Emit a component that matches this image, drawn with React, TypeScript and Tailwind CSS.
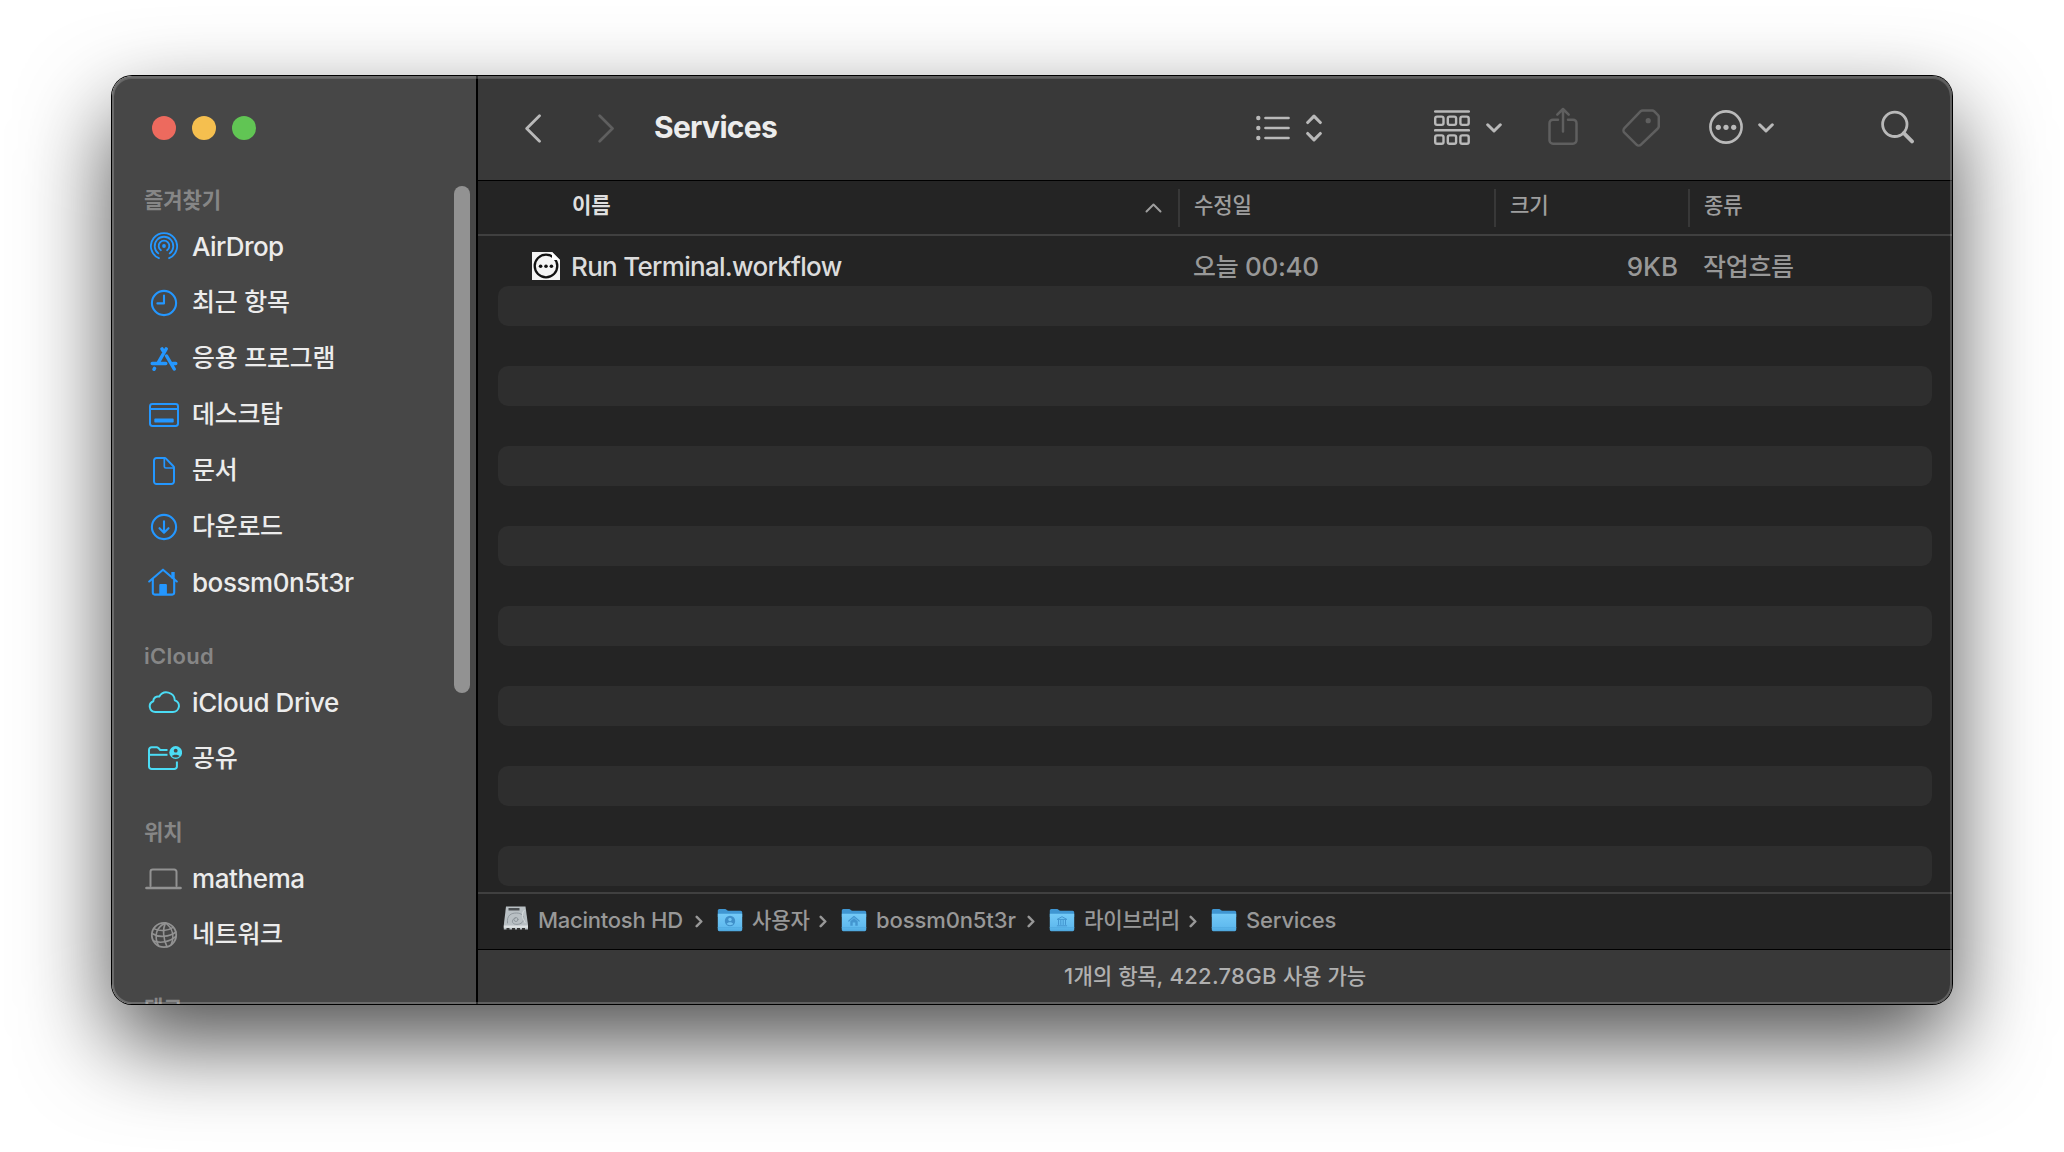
import type { ReactNode } from "react";

/** Splits mixed text so Hangul is set slightly smaller than the Latin around it. */
function T({ children, latin = "", hangul = "" }: { children: string; latin?: string; hangul?: string }) {
  const runs = children.split(/([\uac00-\ud7a3]+)/).filter(Boolean);
  return (
    <>
      {runs.map((run, i) =>
        /[\uac00-\ud7a3]/.test(run) ? (
          <span key={i} className={`text-[0.96em] leading-[0] tracking-[-0.01em] ${hangul}`}>
            {run}
          </span>
        ) : (
          <span key={i} className={latin}>
            {run}
          </span>
        ),
      )}
    </>
  );
}

function Svg({
  w,
  h,
  sw = 2,
  className = "",
  children,
}: {
  w: number;
  h: number;
  sw?: number;
  className?: string;
  children: ReactNode;
}) {
  return (
    <svg
      width={w}
      height={h}
      viewBox={`0 0 ${w} ${h}`}
      fill="none"
      stroke="currentColor"
      strokeWidth={sw}
      strokeLinecap="round"
      strokeLinejoin="round"
      className={`shrink-0 ${className}`}
    >
      {children}
    </svg>
  );
}

const AirDropIcon = () => (
  <Svg w={28} h={28} sw={1.8} className="relative -top-px">
    <path d="M8.9 26.2a13.1 13.1 0 1 1 10.2 0" />
    <path d="M8.3 21.4a9.3 9.3 0 1 1 11.4 0" />
    <path d="M10.9 18.3a5.3 5.3 0 1 1 6.2 0" />
    <circle cx="14" cy="14" r="1.9" fill="currentColor" stroke="none" />
  </Svg>
);
const ClockIcon = () => (
  <Svg w={28} h={28} sw={2.1}>
    <circle cx="14" cy="14" r="12.1" />
    <path d="M14 6.6v7.8H7.4" />
  </Svg>
);
const AppsIcon = () => (
  <Svg w={28} h={24} sw={3.4}>
    <path d="M16.2 1.9 8 16.2M12 1.9l1 1.8M2.2 16.5h13.6M22.8 16.5h3M16.6 9l7.6 13M4.5 21.4l-.5.9" />
  </Svg>
);
const DesktopIcon = () => (
  <Svg w={30} h={24} sw={2}>
    <rect x="1" y="1" width="28" height="22" rx="2.4" />
    <path d="M1 6h28" strokeWidth="1.8" />
    <rect x="5.3" y="15.6" width="19.4" height="4" rx="0.8" fill="currentColor" stroke="none" />
  </Svg>
);
const DocumentIcon = () => (
  <Svg w={22} h={28} sw={2}>
    <path d="M11.6 1H3.5A2.5 2.5 0 0 0 1 3.5V24.5A2.5 2.5 0 0 0 3.5 27h15a2.5 2.5 0 0 0 2.5-2.5V10.6a2 2 0 0 0-.6-1.4L13 1.6A2 2 0 0 0 11.6 1Z" />
    <path d="M11.3 1.4v8a1.6 1.6 0 0 0 1.6 1.6h7.6" strokeWidth="1.7" />
  </Svg>
);
const DownloadIcon = () => (
  <Svg w={28} h={28} sw={2.1}>
    <circle cx="14" cy="14" r="12.1" />
    <path d="M14 8.3v11.2M9.5 15.2l4.5 4.5 4.5-4.5" />
  </Svg>
);
const HomeIcon = () => (
  <Svg w={30} h={28} sw={2.1} className="relative -left-px -top-px">
    <path d="M1.2 13.5 15 1.7l13.8 11.8" />
    <path d="M4.8 11v13.6A2 2 0 0 0 6.8 26.6h17.4a2 2 0 0 0 2-2V11" />
    <path d="M25 4v6.5" strokeWidth="3.4" strokeLinecap="butt" />
    <path d="M11.3 26.5v-9.5a1 1 0 0 1 1-1h5.6a1 1 0 0 1 1 1v9.5z" fill="currentColor" stroke="none" />
  </Svg>
);
const CloudIcon = () => (
  <Svg w={32} h={22} sw={2} className="relative -top-px">
    <path d="M7.3 21h17.6a6 6 0 0 0 1.9-11.7A8.3 8.3 0 0 0 11.3 5.6a4.7 4.7 0 0 0-6 4.6A5.6 5.6 0 0 0 7.3 21Z" />
  </Svg>
);
const SharedFolderIcon = () => (
  <Svg w={34} h={24} sw={2} className="relative left-px -top-px">
    <path
      d="M19.5 4h-7.3L10.3 1.9A2.5 2.5 0 0 0 8.6 1.3H3.6A2.6 2.6 0 0 0 1 3.9v16.5A2.6 2.6 0 0 0 3.6 23H26.3a2.6 2.6 0 0 0 2.6-2.6V15.5"
      strokeLinecap="butt"
    />
    <path d="M1.5 8.8h18" strokeLinecap="butt" />
    <circle cx="27.7" cy="6.5" r="6.4" fill="currentColor" stroke="none" />
    <circle cx="27.7" cy="4.7" r="1.9" fill="#474747" stroke="none" />
    <path d="M24 10.2c.6-2 6.800-2 7.400 0-1.800 1.800-5.600 1.800-7.400 0Z" fill="#474747" stroke="none" />
  </Svg>
);
const LaptopIcon = () => (
  <Svg w={37} h={22} sw={2} className="relative -left-px">
    <path d="M5.500 18V3.800A2.300 2.300 0 0 1 7.800 1.500h21.400a2.300 2.300 0 0 1 2.300 2.300V18" />
    <path d="M1.500 20h34" strokeWidth="2.700" />
  </Svg>
);
const GlobeIcon = () => (
  <Svg w={28} h={28} sw={1.6}>
    <circle cx="14" cy="14" r="12.2" strokeWidth="1.800" />
    <path d="M15.500 1.900C6 6 3.800 15 8.500 24.800M15.500 1.900c-3 6-2.500 15.500 1.500 24M15.500 1.900c7 5 9 13 5.800 21.500" />
    <path d="M3.800 7.600c6 3 14 2.500 19.300-1.200M2 12.500c7 4.500 17 3.500 24-1.500M3.700 20c7 2.500 16 1 22-4.500" />
  </Svg>
);

const BLUE = "text-[#2497ff]";
const CYAN = "text-[#4bdcf5]";
const GRAY = "text-[#929292]";

const SECTIONS = [
  {
    title: "즐겨찾기",
    color: BLUE,
    items: [
      { label: "AirDrop", icon: <AirDropIcon />, latin: "tracking-[-0.6px]" },
      { label: "최근 항목", icon: <ClockIcon /> },
      { label: "응용 프로그램", icon: <AppsIcon /> },
      { label: "데스크탑", icon: <DesktopIcon /> },
      { label: "문서", icon: <DocumentIcon /> },
      { label: "다운로드", icon: <DownloadIcon /> },
      { label: "bossm0n5t3r", icon: <HomeIcon />, latin: "tracking-[-0.45px]" },
    ],
  },
  {
    title: "iCloud",
    color: CYAN,
    items: [
      { label: "iCloud Drive", icon: <CloudIcon />, latin: "tracking-[-0.42px]" },
      { label: "공유", icon: <SharedFolderIcon /> },
    ],
  },
  {
    title: "위치",
    color: GRAY,
    items: [
      { label: "mathema", icon: <LaptopIcon />, latin: "tracking-[-0.4px]" },
      { label: "네트워크", icon: <GlobeIcon /> },
    ],
  },
  { title: "태그", color: GRAY, items: [] },
];

function Sidebar() {
  return (
    <aside className="flex w-[366px] shrink-0 flex-col border-r-2 border-black bg-[#474747]">
      <div className="flex h-[103px] shrink-0 gap-4 pl-10 pt-10">
        <span className="size-6 rounded-full bg-[#ed6a5e]" />
        <span className="size-6 rounded-full bg-[#f5bf4f]" />
        <span className="size-6 rounded-full bg-[#61c554]" />
      </div>
      <div className="flex min-h-0 flex-1 justify-between pr-1.5">
        <nav className="overflow-hidden pl-8">
          {SECTIONS.map((s, i) => (
            <section key={s.title} className={i === 0 ? "" : "pt-6"}>
              <h2 className="flex h-10 items-center pt-0.5 text-[22px] font-semibold leading-[38px] text-[#868686]">
                <span className="whitespace-pre">
                  <T latin="tracking-[0.28px]">{s.title}</T>
                </span>
              </h2>
              {s.items.map((it) => (
                <div key={it.label} className="flex h-14 items-center">
                  <span className={`flex w-10 justify-center ${s.color}`}>{it.icon}</span>
                  <span className="whitespace-pre pl-2 text-[26px] font-medium leading-10 text-[#ececec]">
                    <T latin={it.latin} hangul="relative -top-px">
                      {it.label}
                    </T>
                  </span>
                </div>
              ))}
            </section>
          ))}
        </nav>
        <div className="mt-[7px] h-[507px] w-4 rounded-full bg-[#929292]" />
      </div>
    </aside>
  );
}

const ChevronDown = () => (
  <Svg w={16} h={10} sw={3}>
    <path d="m1.700 1.800 6.300 6.200 6.300-6.200" />
  </Svg>
);

function Toolbar() {
  return (
    <header className="flex h-[105px] shrink-0 items-center border-b border-black bg-[#393939] pl-[47px] text-[#b9b9b9]">
      <Svg w={16} h={29} sw={2.800}>
        <path d="M14.500 1.700 1.700 14.500l12.800 12.800" />
      </Svg>
      <Svg w={16} h={29} sw={2.700} className="ml-[57px] text-[#5f5f5f]">
        <path d="m1.700 1.700 12.800 12.800L1.700 27.300" />
      </Svg>
      <h1 className="ml-10 w-[602px] pb-0.5 text-[30px] font-bold leading-10 tracking-[-0.7px] text-[#ececec]">
        Services
      </h1>
      <Svg w={34} h={26} sw={2.700}>
        <g fill="currentColor" stroke="none">
          <circle cx="2.300" cy="3" r="2.200" />
          <circle cx="2.300" cy="13" r="2.200" />
          <circle cx="2.300" cy="23" r="2.200" />
        </g>
        <path d="M9.500 3h23M9.500 13h23M9.500 23h23" />
      </Svg>
      <Svg w={16} h={28} sw={3.100} className="ml-4">
        <path d="m1.700 8.500 6.300-6.300 6.300 6.300M1.700 19.500l6.300 6.300 6.300-6.300" />
      </Svg>
      <Svg w={36} h={36} sw={2.400} className="relative -top-px ml-28">
        <path d="M1.200 2.500h33.600M1.200 21.300h33.600" strokeWidth="2.600" />
        {[7.6, 26.4].map((y) =>
          [1.2, 13.8, 26.4].map((x) => (
            <rect key={`${x}-${y}`} x={x} y={y} width="8.300" height="8.300" rx="1.800" />
          )),
        )}
      </Svg>
      <span className="ml-4">
        <ChevronDown />
      </span>
      <Svg w={30} h={38} sw={2.500} className="relative -top-0.5 ml-[46px] text-[#5f5f5f]">
        <path d="M10 12.700H5A3.500 3.500 0 0 0 1.500 16.200v17A3.500 3.500 0 0 0 5 36.700h20a3.500 3.500 0 0 0 3.500-3.500v-17a3.500 3.500 0 0 0-3.500-3.500h-5" />
        <path d="M15 24.500V2M9.300 7.700 15 2l5.700 5.700" />
      </Svg>
      <Svg w={38} h={38} sw={2.500} className="ml-11 text-[#5f5f5f]">
        <path d="M20.800 1.500h9.400a3 3 0 0 1 2.100.9l3.700 3.700a3 3 0 0 1 .8 2.100v8.800a3.500 3.500 0 0 1-1 2.500L19 35.600a3.200 3.200 0 0 1-4.500 0L2.400 23.700a3.200 3.200 0 0 1 0-4.500L18.500 2.400a3.200 3.200 0 0 1 2.300-.9Z" />
        <circle cx="26.200" cy="11.700" r="2.600" fill="currentColor" stroke="none" />
      </Svg>
      <Svg w={34} h={34} sw={2.600} className="relative -top-px ml-[49px]">
        <circle cx="17" cy="17" r="15.600" />
        <g fill="currentColor" stroke="none">
          <circle cx="9.300" cy="17.300" r="2.600" />
          <circle cx="17" cy="17.300" r="2.600" />
          <circle cx="24.700" cy="17.300" r="2.600" />
        </g>
      </Svg>
      <span className="ml-[15px]">
        <ChevronDown />
      </span>
      <Svg w={34} h={34} sw={2.800} className="relative -top-px ml-[107px]">
        <circle cx="13.800" cy="14.300" r="12.200" />
        <path d="m22.800 23.200 8.200 8.200" strokeWidth="3.800" />
      </Svg>
    </header>
  );
}

function ColumnHeader() {
  const col = "h-[38px] flex items-center border-[#383838] pl-3.5 pb-[5px]";
  return (
    <div className="flex h-[55px] shrink-0 items-center border-b-2 border-[#404040] text-[22px] font-medium leading-8 text-[#9e9e9e]">
      <div className="flex h-[38px] w-[700px] items-center justify-between pl-[94px] pr-4">
        <span className="whitespace-pre pb-[5px] font-bold text-[#dfdfdf]">
          <T>이름</T>
        </span>
        <Svg w={17} h={10} sw={2}>
          <path d="m1.500 8.500 7-7 7 7" />
        </Svg>
      </div>
      <div className={`${col} w-[316px] border-l-2`}>
        <span>
          <T>수정일</T>
        </span>
      </div>
      <div className={`${col} w-[194px] border-l-2`}>
        <span>
          <T>크기</T>
        </span>
      </div>
      <div className={`${col} flex-1 border-l-2`}>
        <span>
          <T>종류</T>
        </span>
      </div>
    </div>
  );
}

const WorkflowIcon = () => (
  <Svg w={28} h={28} sw={2.300}>
    <path d="M0 0h20l8 8v20H0z" fill="#f4f4f4" stroke="none" />
    <circle cx="14" cy="14" r="11.300" stroke="#111" />
    <path d="M20 0v8h8z" fill="#fff" stroke="none" />
    <g fill="#111" stroke="none">
      <circle cx="8.600" cy="14.200" r="1.800" />
      <circle cx="14" cy="14.200" r="1.800" />
      <circle cx="19.400" cy="14.200" r="1.800" />
    </g>
  </Svg>
);

function FileList() {
  return (
    <div className="flex min-h-0 flex-1 flex-col px-5 pt-2.5">
      <div className="flex h-10 shrink-0 items-center text-[26px] font-medium leading-[38px] text-[#989898]">
        <div className="flex w-[695px] items-center pl-[34px]">
          <WorkflowIcon />
          <span className="whitespace-pre pl-[11px] pt-0.5 tracking-[-0.7px] text-[#dcdcdc]">
            Run Terminal.workflow
          </span>
        </div>
        <span className="w-[310px] whitespace-pre pt-0.5">
          <T latin="tracking-[-0.3px]">오늘 00:40</T>
        </span>
        <span className="w-[175px] pt-0.5 text-right">9KB</span>
        <span className="whitespace-pre pl-[25px] pt-0.5">
          <T>작업흐름</T>
        </span>
      </div>
      {Array.from({ length: 15 }, (_, i) => (
        <div key={i} className="h-10 shrink-0 rounded-[10px] odd:bg-transparent even:bg-[#2e2e2e]" />
      ))}
    </div>
  );
}

const DiskIcon = () => (
  <Svg w={26} h={27} sw={0.900} className="relative -top-px">
    <path d="M3 1.500h19.500L25 20v4.500H.8V20z" fill="#b9c0c4" stroke="none" />
    <path d="M.8 20.500H25v2.300H.8z" fill="#dde1e3" stroke="none" />
    <path d="M3.500 24h3M9 24h3M14 24h3M19 24h3" stroke="#333" strokeWidth="2.200" strokeLinecap="butt" />
    <path d="M5.500 3h11v2.500h-11z" fill="#4b4f52" stroke="none" />
    <path d="M4.500 18c-1-8 4-10 9-10s8 3 7 7-6 5-9 4-3-5 1-6" stroke="#8a9297" />
    <circle cx="13" cy="14.500" r="2" stroke="#8a9297" />
    <path d="M21 5.500c-3 3-1 9 1 12" stroke="#dfe3e5" />
  </Svg>
);

function Folder({ children }: { children?: ReactNode }) {
  return (
    <Svg w={26} h={24} sw={1} className="text-[#4395cf]">
      <defs>
        <linearGradient id="folder" x1="0" y1="0" x2="0" y2="1">
          <stop offset="0" stopColor="#74caf7" />
          <stop offset="0.8" stopColor="#5fb9ee" />
          <stop offset="1" stopColor="#4ba5dc" />
        </linearGradient>
      </defs>
      <path
        d="M.8 2.500A1.500 1.500 0 0 1 2.300 1H8c1.500 0 2 1.800 3.500 1.800h12.200a1.500 1.500 0 0 1 1.500 1.500V9H.8z"
        fill="#3f96d2"
        stroke="none"
      />
      <path
        d="M.8 5.800h24.400v16a1.400 1.400 0 0 1-1.400 1.400H2.200A1.400 1.400 0 0 1 .8 21.800z"
        fill="url(#folder)"
        stroke="none"
      />
      <path d="M1 19.700h24" stroke="#4ea8de" strokeWidth="0.800" />
      {children}
    </Svg>
  );
}

const UserGlyph = () => (
  <>
    <circle cx="13" cy="13" r="5.200" fill="#3f8fc9" stroke="none" />
    <circle cx="13" cy="11.500" r="1.700" fill="#6fc3f2" stroke="none" />
    <path d="M9.800 16c.7-2.300 5.700-2.300 6.400 0-1.500 1.500-4.900 1.500-6.400 0Z" fill="#6fc3f2" stroke="none" />
  </>
);
const HouseGlyph = () => (
  <>
    <path d="M7.800 13 13 8.500l5.200 4.500" strokeWidth="1.200" />
    <path d="M9.300 13.200 13 10l3.700 3.200v4.600h-2.400V14.500h-2.600v3.300H9.300z" fill="currentColor" stroke="none" />
  </>
);
const LibraryGlyph = () => (
  <path
    d="M8.500 11.200 13 8.700l4.500 2.500zM9.500 12v4.500M11.800 12v4.500M14.200 12v4.500M16.500 12v4.500M8.300 17.800h9.400"
    strokeWidth="1"
  />
);

function PathBar() {
  const gt = (
    <Svg w={8} h={13} sw={2.500} className="relative top-0.5">
      <path d="m1.700 1.800 4.600 4.700-4.600 4.700" />
    </Svg>
  );
  return (
    <div className="flex h-[58px] shrink-0 items-center whitespace-pre border-b border-t-2 border-b-black border-t-[#404040] pb-1 pl-[25px] text-[22px] font-medium leading-8 text-[#989898]">
      <DiskIcon />
      <span className="w-[166px] pl-[9px] tracking-[-0.25px]">Macintosh HD</span>
      {gt}
      <span className="w-3.5" />
      <Folder>
        <UserGlyph />
      </Folder>
      <span className="w-[76px] pl-[9px]">
        <T>사용자</T>
      </span>
      {gt}
      <span className="w-3.5" />
      <Folder>
        <HouseGlyph />
      </Folder>
      <span className="w-[160px] pl-[9px] tracking-[-0.1px]">bossm0n5t3r</span>
      {gt}
      <span className="w-3.5" />
      <Folder>
        <LibraryGlyph />
      </Folder>
      <span className="w-[114px] pl-[9px]">
        <T>라이브러리</T>
      </span>
      {gt}
      <span className="w-3.5" />
      <Folder />
      <span className="pl-[9px] tracking-[-0.2px]">Services</span>
    </div>
  );
}

export default function App() {
  return (
    <div className="h-[1152px] w-[2064px] overflow-hidden bg-white px-28 pt-[76px] font-['Inter','Noto_Sans_CJK_KR',sans-serif]">
      <div className="relative h-[928px] w-[1840px] rounded-[20px] shadow-[0_0_0_1px_#000,0_38px_90px_rgba(0,0,0,0.7)]">
        <div className="flex h-full overflow-hidden rounded-[20px]">
          <Sidebar />
          <main className="flex min-w-0 flex-1 flex-col bg-[#242424]">
            <Toolbar />
            <ColumnHeader />
            <FileList />
            <PathBar />
            <footer className="flex h-[54px] shrink-0 items-center justify-center whitespace-pre bg-[#393939] pb-0.5 text-[22px] font-medium leading-8 text-[#b0b0b0]">
              <span>
                <T latin="tracking-[0.3px]">1개의 항목, 422.78GB 사용 가능</T>
              </span>
            </footer>
          </main>
        </div>
        <div className="pointer-events-none absolute inset-0 rounded-[20px] border-2 border-white/20 shadow-[inset_0_1px_0_rgba(255,255,255,0.15)]" />
      </div>
    </div>
  );
}
